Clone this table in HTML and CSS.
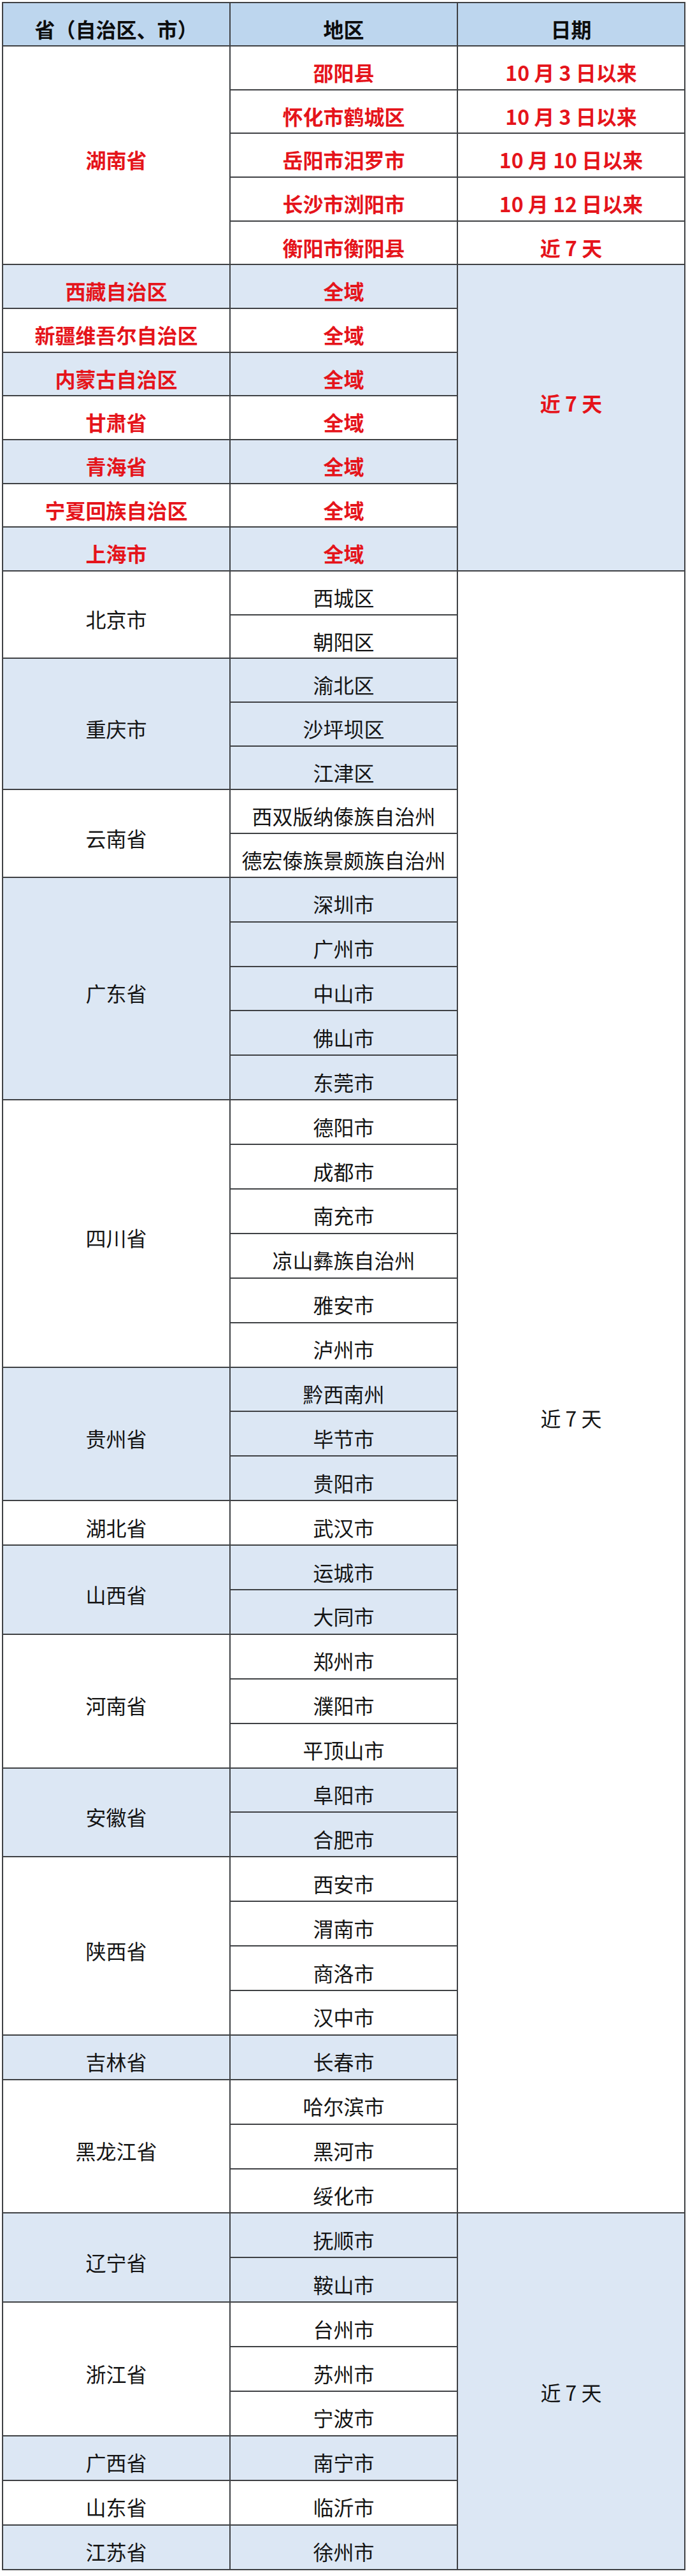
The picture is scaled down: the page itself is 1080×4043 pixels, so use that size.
FILE: index.html
```html
<!DOCTYPE html>
<html lang="zh-CN">
<head>
<meta charset="utf-8">
<title>风险地区</title>
<link rel="stylesheet" href="styles.css">
</head>
<body>
<div class="sheet" role="table">
  <div class="cell c1 hd">省（自治区、市）</div>
  <div class="cell c2 hd">地区</div>
  <div class="cell c3 hd">日期</div>

  <div class="cell c1 rs5 red">湖南省</div>
  <div class="cell c2 red">邵阳县</div>
  <div class="cell c3 red">10 月 3 日以来</div>
  <div class="cell c2 red">怀化市鹤城区</div>
  <div class="cell c3 red">10 月 3 日以来</div>
  <div class="cell c2 red">岳阳市汨罗市</div>
  <div class="cell c3 red">10 月 10 日以来</div>
  <div class="cell c2 red">长沙市浏阳市</div>
  <div class="cell c3 red">10 月 12 日以来</div>
  <div class="cell c2 red">衡阳市衡阳县</div>
  <div class="cell c3 red">近 7 天</div>

  <div class="cell c1 blue red">西藏自治区</div>
  <div class="cell c2 blue red">全域</div>
  <div class="cell c3 rs7 blue red up">近 7 天</div>
  <div class="cell c1 red">新疆维吾尔自治区</div>
  <div class="cell c2 red">全域</div>
  <div class="cell c1 blue red">内蒙古自治区</div>
  <div class="cell c2 blue red">全域</div>
  <div class="cell c1 red">甘肃省</div>
  <div class="cell c2 red">全域</div>
  <div class="cell c1 blue red">青海省</div>
  <div class="cell c2 blue red">全域</div>
  <div class="cell c1 red">宁夏回族自治区</div>
  <div class="cell c2 red">全域</div>
  <div class="cell c1 blue red">上海市</div>
  <div class="cell c2 blue red">全域</div>

  <div class="cell c1 rs2">北京市</div>
  <div class="cell c2">西城区</div>
  <div class="cell c3 rs37 down">近 7 天</div>
  <div class="cell c2">朝阳区</div>

  <div class="cell c1 rs3 blue">重庆市</div>
  <div class="cell c2 blue">渝北区</div>
  <div class="cell c2 blue">沙坪坝区</div>
  <div class="cell c2 blue">江津区</div>

  <div class="cell c1 rs2">云南省</div>
  <div class="cell c2">西双版纳傣族自治州</div>
  <div class="cell c2">德宏傣族景颇族自治州</div>

  <div class="cell c1 rs5 blue">广东省</div>
  <div class="cell c2 blue">深圳市</div>
  <div class="cell c2 blue">广州市</div>
  <div class="cell c2 blue">中山市</div>
  <div class="cell c2 blue">佛山市</div>
  <div class="cell c2 blue">东莞市</div>

  <div class="cell c1 rs6">四川省</div>
  <div class="cell c2">德阳市</div>
  <div class="cell c2">成都市</div>
  <div class="cell c2">南充市</div>
  <div class="cell c2">凉山彝族自治州</div>
  <div class="cell c2">雅安市</div>
  <div class="cell c2">泸州市</div>

  <div class="cell c1 rs3 blue">贵州省</div>
  <div class="cell c2 blue">黔西南州</div>
  <div class="cell c2 blue">毕节市</div>
  <div class="cell c2 blue">贵阳市</div>

  <div class="cell c1">湖北省</div>
  <div class="cell c2">武汉市</div>

  <div class="cell c1 rs2 blue">山西省</div>
  <div class="cell c2 blue">运城市</div>
  <div class="cell c2 blue">大同市</div>

  <div class="cell c1 rs3">河南省</div>
  <div class="cell c2">郑州市</div>
  <div class="cell c2">濮阳市</div>
  <div class="cell c2">平顶山市</div>

  <div class="cell c1 rs2 blue">安徽省</div>
  <div class="cell c2 blue">阜阳市</div>
  <div class="cell c2 blue">合肥市</div>

  <div class="cell c1 rs4">陕西省</div>
  <div class="cell c2">西安市</div>
  <div class="cell c2">渭南市</div>
  <div class="cell c2">商洛市</div>
  <div class="cell c2">汉中市</div>

  <div class="cell c1 blue">吉林省</div>
  <div class="cell c2 blue">长春市</div>

  <div class="cell c1 rs3">黑龙江省</div>
  <div class="cell c2">哈尔滨市</div>
  <div class="cell c2">黑河市</div>
  <div class="cell c2">绥化市</div>

  <div class="cell c1 rs2 blue">辽宁省</div>
  <div class="cell c2 blue">抚顺市</div>
  <div class="cell c3 rs8 blue flat">近 7 天</div>
  <div class="cell c2 blue">鞍山市</div>

  <div class="cell c1 rs3">浙江省</div>
  <div class="cell c2">台州市</div>
  <div class="cell c2">苏州市</div>
  <div class="cell c2">宁波市</div>

  <div class="cell c1 blue">广西省</div>
  <div class="cell c2 blue">南宁市</div>

  <div class="cell c1">山东省</div>
  <div class="cell c2">临沂市</div>

  <div class="cell c1 blue">江苏省</div>
  <div class="cell c2 blue">徐州市</div>
</div>
</body>
</html>
```

FILE: styles.css
```css
html, body {
  margin: 0;
  padding: 0;
  background: #ffffff;
}

body {
  font-family: "Noto Sans CJK SC", "Noto Sans", "Liberation Sans", sans-serif;
  font-size: 32px;
  color: #141414;
}

.sheet {
  margin: 3px 0 0 3px;
  width: 1073px;
  box-sizing: border-box;
  padding: 2px;
  background: #3f4144;
  display: grid;
  gap: 2px;
  grid-template-columns: repeat(3, 355px);
  grid-template-rows: 66px repeat(19, 66.68px) repeat(38, 67.9px);
}

.cell {
  background: #ffffff;
  display: flex;
  align-items: center;
  justify-content: center;
  text-align: center;
  line-height: 1;
  padding-top: 13px;
  box-sizing: border-box;
  white-space: nowrap;
}

.c1 { grid-column: 1; }
.c2 { grid-column: 2; }
.c3 { grid-column: 3; }

.rs2 { grid-row: span 2; }
.rs3 { grid-row: span 3; }
.rs4 { grid-row: span 4; }
.rs5 { grid-row: span 5; }
.rs6 { grid-row: span 6; }
.rs7 { grid-row: span 7; }
.rs8 { grid-row: span 8; }
.rs37 { grid-row: span 37; }

.hd {
  background: #bdd6ee;
  font-weight: 700;
  color: #0d0d0d;
}

.blue {
  background: #dce7f4;
}

.red {
  color: #e5141b;
  font-weight: 700;
}

/* merged date cells whose label sits off the middle */
.up {
  padding-top: 0;
  padding-bottom: 48px;
}

.down {
  padding-top: 81px;
}

.flat {
  padding-top: 2px;
}
```
